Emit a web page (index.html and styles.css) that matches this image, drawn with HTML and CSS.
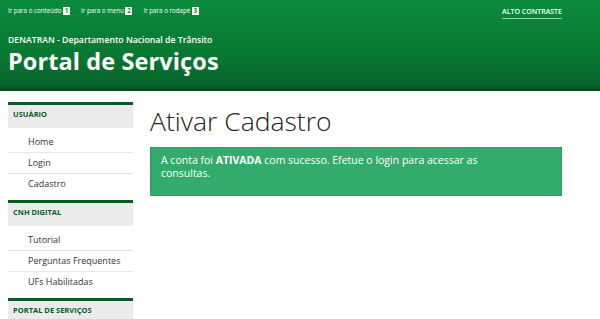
FILE: index.html
```html
<!DOCTYPE html>
<html lang="pt-BR">
<head>
<meta charset="utf-8">
<title>Portal de Serviços</title>
<link rel="stylesheet" href="styles.css">
</head>
<body>
<header class="header">
  <div class="topbar">
    <ul class="skip">
      <li><a href="#">Ir para o conteúdo <span class="key">1</span></a></li>
      <li><a href="#">Ir para o menu <span class="key">2</span></a></li>
      <li><a href="#">Ir para o rodapé <span class="key">3</span></a></li>
    </ul>
    <a class="contrast" href="#">ALTO CONTRASTE</a>
  </div>
  <div class="brand">
    <div class="org">DENATRAN - Departamento Nacional de Trânsito</div>
    <h1 class="title">Portal de Serviços</h1>
  </div>
</header>
<div class="layout">
  <nav class="sidebar">
    <section class="menu">
      <h2 class="menu-head">USUÁRIO</h2>
      <ul class="menu-list">
        <li><a href="#">Home</a></li>
        <li><a href="#">Login</a></li>
        <li><a href="#">Cadastro</a></li>
      </ul>
    </section>
    <section class="menu">
      <h2 class="menu-head">CNH DIGITAL</h2>
      <ul class="menu-list">
        <li><a href="#">Tutorial</a></li>
        <li><a href="#">Perguntas Frequentes</a></li>
        <li><a href="#">UFs Habilitadas</a></li>
      </ul>
    </section>
    <section class="menu">
      <h2 class="menu-head">PORTAL DE SERVIÇOS</h2>
    </section>
  </nav>
  <main class="content">
    <h1 class="page-title">Ativar Cadastro</h1>
    <div class="alert">A conta foi <strong>ATIVADA</strong> com sucesso. Efetue o login para acessar as consultas.</div>
  </main>
</div>
</body>
</html>
```
FILE: styles.css
```css
* { box-sizing: border-box; }
html, body { margin: 0; padding: 0; }
body {
  font-family: "Open Sans", "DejaVu Sans", sans-serif;
  background: #fff;
  color: #333;
  overflow: hidden;
}
a { color: inherit; text-decoration: none; }
ul { list-style: none; margin: 0; padding: 0; }

.header {
  height: 91px;
  background: linear-gradient(#0b8b3b 0%, #097a33 55%, #07652a 92%, #05461c 100%);
  color: #fff;
  padding: 0 8px;
}
.topbar {
  display: flex;
  justify-content: space-between;
  align-items: flex-start;
  height: 34px;
  padding-top: 7px;
}
.skip { display: flex; gap: 11px; font-size: 6.2px; line-height: 8px; }
.key {
  display: inline-block;
  background: #fff;
  color: #0b8b3b;
  font-weight: 700;
  font-size: 6.2px;
  line-height: 8px;
  padding: 0 1px;
  min-width: 7px;
  text-align: center;
}
.contrast {
  font-size: 7px;
  font-weight: 600;
  line-height: 9px;
  margin-right: 30px;
  padding-bottom: 2px;
  border-bottom: 1px solid #8fd0a5;
}
.org { font-size: 8.7px; font-weight: 600; line-height: 13px; }
.title {
  margin: 0;
  font-size: 23.5px;
  font-weight: 700;
  line-height: 28px;
  letter-spacing: 0.1px;
}

.layout {
  display: flex;
  padding: 11px 8px 0;
  gap: 17px;
}
.sidebar { width: 125px; flex: none; }
.menu { border-top: 3px solid #0b5a22; margin-bottom: 5px; }
.menu-head {
  margin: 0;
  background: #ebebeb;
  color: #0b5a22;
  font-size: 7.5px;
  font-weight: 700;
  line-height: 10px;
  height: 23px;
  padding: 4px 5px 0;
}
.menu-list { padding-top: 4px; }
.menu-list li {
  border-bottom: 1px solid #e6e6e6;
}
.menu-list li:last-child { border-bottom-color: transparent; }
.menu-list a {
  display: block;
  font-size: 9px;
  line-height: 20px;
  padding-left: 20px;
  color: #333;
}

.content { width: 412px; }
.page-title {
  margin: 3px 0 10px;
  font-size: 26.5px;
  font-weight: 300;
  line-height: 32px;
  color: #222;
}
.alert {
  background: #33ab6c;
  border: 1px solid #2b9d60;
  color: #fff;
  font-size: 10.5px;
  line-height: 13px;
  padding: 6px 60px 15px 10px;
}
.alert strong { font-weight: 700; }
```
